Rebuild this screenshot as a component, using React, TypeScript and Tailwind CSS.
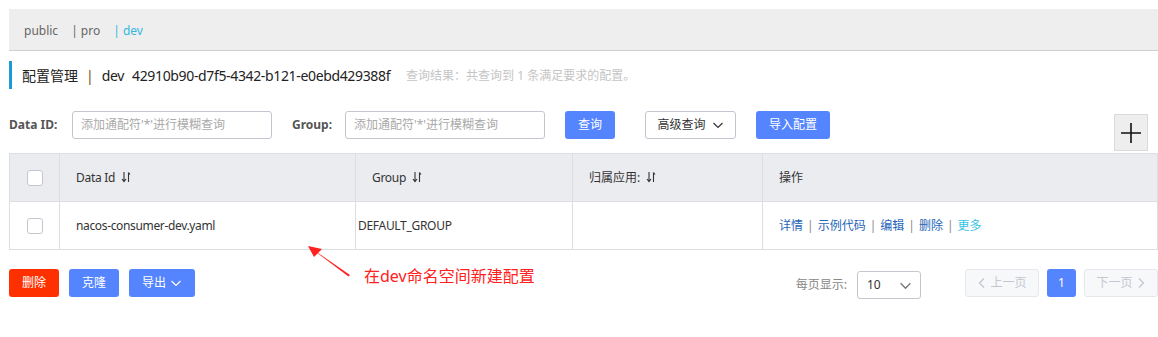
import React from "react";

const font = { fontFamily: '"Noto Sans", "Noto Sans CJK SC", sans-serif' };

function SortIcon() {
  return (
    <svg width="10" height="12" viewBox="0 0 10 12" className="inline-block ml-[6px] -mt-[2px]">
      <path d="M3 1 V10 M1 8 L3 10.5 L5 8" stroke="#333" strokeWidth="1.1" fill="none" />
      <path d="M7.5 11 V1.5 M7.5 1.5 L9 3.5" stroke="#333" strokeWidth="1.1" fill="none" />
    </svg>
  );
}

function Chevron({ color = "#333", size = 12 }: { color?: string; size?: number }) {
  return (
    <svg width={size} height={size} viewBox="0 0 12 12" className="inline-block">
      <path d="M1.5 4 L6 8.5 L10.5 4" stroke={color} strokeWidth="1.2" fill="none" />
    </svg>
  );
}

function Checkbox() {
  return <div className="w-[16px] h-[16px] rounded-[3px] border border-[#c4c6cf] bg-white" />;
}

function Sep() {
  return <span className="mx-[4px] text-[#8a8a8a]">|</span>;
}

export default function App() {
  return (
    <div className="relative w-[1158px] h-[337px] bg-white pl-[9px] pt-[9px] text-[#333]" style={font}>
      {/* namespace bar */}
      <div className="h-[42px] bg-[#eeeeee] border-b border-[#cfcfcf] flex items-center pl-[15px] pt-[2px] text-[12px] text-[#666]">
        <span>public</span>
        <span className="ml-[13px]">| pro</span>
        <span className="ml-[13px] text-[#33b7e0]">| dev</span>
      </div>

      {/* title */}
      <div className="mt-[10px] h-[28px] flex items-center border-l-[3px] border-[#1b9ad6] pl-[10px] pt-[1px]">
        <span className="text-[14px] text-[#222]">配置管理</span>
        <span className="text-[14px] text-[#7a4d12] mx-[8px]">|</span>
        <span className="text-[14px] text-[#222] tracking-[-0.35px]">dev</span>
        <span className="text-[14px] text-[#222] ml-[8px] tracking-[-0.35px]">42910b90-d7f5-4342-b121-e0ebd429388f</span>
        <span className="text-[12px] text-[#c5c5c5] ml-[16px]">查询结果：共查询到 1 条满足要求的配置。</span>
      </div>

      {/* search row */}
      <div className="mt-[21px] flex items-start">
        <div className="flex items-center h-[29px]">
          <span className="text-[12px] font-bold text-[#555] w-[63px]">Data ID:</span>
          <div className="w-[200px] h-[28px] border border-[#c4c6cf] rounded-[3px] flex items-center px-[8px] text-[12px] text-[#aaa]">
            添加通配符'*'进行模糊查询
          </div>
          <span className="text-[12px] font-bold text-[#555] ml-[20px] w-[53px]">Group:</span>
          <div className="w-[200px] h-[28px] border border-[#c4c6cf] rounded-[3px] flex items-center px-[8px] text-[12px] text-[#aaa]">
            添加通配符'*'进行模糊查询
          </div>
          <div className="ml-[20px] w-[50px] h-[28px] rounded-[3px] bg-[#5584ff] text-white text-[12px] flex items-center justify-center">
            查询
          </div>
          <div className="ml-[30px] w-[91px] h-[28px] rounded-[3px] border border-[#c4c6cf] bg-white text-[12px] text-[#333] flex items-center justify-center gap-[6px]">
            高级查询 <Chevron />
          </div>
          <div className="ml-[20px] w-[74px] h-[28px] rounded-[3px] bg-[#5584ff] text-white text-[12px] flex items-center justify-center">
            导入配置
          </div>
        </div>
        <div className="ml-auto mr-[10px] mt-[4px] w-[34px] h-[37px] bg-[#eeeeee] border border-[#dadada] flex items-center justify-center">
          <svg width="22" height="22" viewBox="0 0 22 22">
            <path d="M11 1 V21 M1 11 H21" stroke="#111" strokeWidth="1.6" />
          </svg>
        </div>
      </div>

      {/* table */}
      <div className="mt-[2px] border border-[#dcdee3] text-[12px]">
        <div className="flex h-[48px] bg-[#ebecf0] border-b border-[#dcdee3]">
          <div className="w-[50px] border-r border-[#dcdee3] flex items-center justify-center"><Checkbox /></div>
          <div className="w-[296px] border-r border-[#dcdee3] flex items-center pl-[16px] tracking-[-0.3px]">Data Id<SortIcon /></div>
          <div className="w-[217px] border-r border-[#dcdee3] flex items-center pl-[16px] tracking-[-0.3px]">Group<SortIcon /></div>
          <div className="w-[190px] border-r border-[#dcdee3] flex items-center pl-[16px]">归属应用:<SortIcon /></div>
          <div className="flex-1 flex items-center pl-[16px]">操作</div>
        </div>
        <div className="flex h-[47px] bg-white">
          <div className="w-[50px] border-r border-[#dcdee3] flex items-center justify-center"><Checkbox /></div>
          <div className="w-[296px] border-r border-[#dcdee3] flex items-center pl-[16px] tracking-[-0.35px]">nacos-consumer-dev.yaml</div>
          <div className="w-[217px] border-r border-[#dcdee3] flex items-center pl-[2px] tracking-[-0.3px]">DEFAULT_GROUP</div>
          <div className="w-[190px] border-r border-[#dcdee3]" />
          <div className="flex-1 flex items-center pl-[16px] text-[#1f66b8]">
            <span>详情</span>
            <Sep />
            <span>示例代码</span>
            <Sep />
            <span>编辑</span>
            <Sep />
            <span>删除</span>
            <Sep />
            <span className="text-[#33c3e3]">更多</span>
          </div>
        </div>
      </div>

      {/* bottom row */}
      <div className="mt-[19px] flex items-start">
        <div className="flex items-center gap-[10px]">
          <div className="w-[50px] h-[28px] rounded-[3px] bg-[#ff3000] text-white text-[12px] flex items-center justify-center">删除</div>
          <div className="w-[50px] h-[28px] rounded-[3px] bg-[#5584ff] text-white text-[12px] flex items-center justify-center">克隆</div>
          <div className="w-[66px] h-[28px] rounded-[3px] bg-[#5584ff] text-white text-[12px] flex items-center justify-center gap-[4px]">
            导出 <Chevron color="#fff" />
          </div>
        </div>
        <div className="ml-[169px] mt-[-5px] text-[16px] text-[#ff2020]">在dev命名空间新建配置</div>
        <div className="ml-auto flex items-start">
          <div className="flex items-center mt-[2px]">
            <span className="text-[12px] text-[#888] mr-[10px]">每页显示:</span>
            <div className="w-[64px] h-[28px] border border-[#c4c6cf] rounded-[3px] flex items-center justify-between pl-[9px] pr-[8px] text-[12px] text-[#333]">
              <span>10</span>
              <Chevron color="#777" size={13} />
            </div>
          </div>
          <div className="ml-[44px] w-[74px] h-[28px] rounded-[3px] border border-[#e6e7eb] bg-[#f7f8fa] text-[12px] text-[#c4c6cf] flex items-center justify-center gap-[3px]">
            <svg width="10" height="12" viewBox="0 0 10 12"><path d="M7 1.5 L2.5 6 L7 10.5" stroke="#c4c6cf" strokeWidth="1.3" fill="none" /></svg>
            上一页
          </div>
          <div className="ml-[8px] w-[29px] h-[28px] rounded-[3px] bg-[#5584ff] text-white text-[12px] flex items-center justify-center">1</div>
          <div className="ml-[8px] w-[74px] h-[28px] rounded-[3px] border border-[#e6e7eb] bg-[#f7f8fa] text-[12px] text-[#c4c6cf] flex items-center justify-center gap-[3px]">
            下一页
            <svg width="10" height="12" viewBox="0 0 10 12"><path d="M3 1.5 L7.5 6 L3 10.5" stroke="#c4c6cf" strokeWidth="1.3" fill="none" /></svg>
          </div>
        </div>
      </div>

      {/* annotation arrow */}
      <svg className="absolute left-[300px] top-[240px]" width="60" height="40" viewBox="0 0 60 40">
        <path d="M8 6 L50 35 L48.5 36.5 Z" fill="#ff2020" />
        <path d="M8 6 L22 9 L14 17 Z" fill="#ff2020" />
      </svg>
    </div>
  );
}
